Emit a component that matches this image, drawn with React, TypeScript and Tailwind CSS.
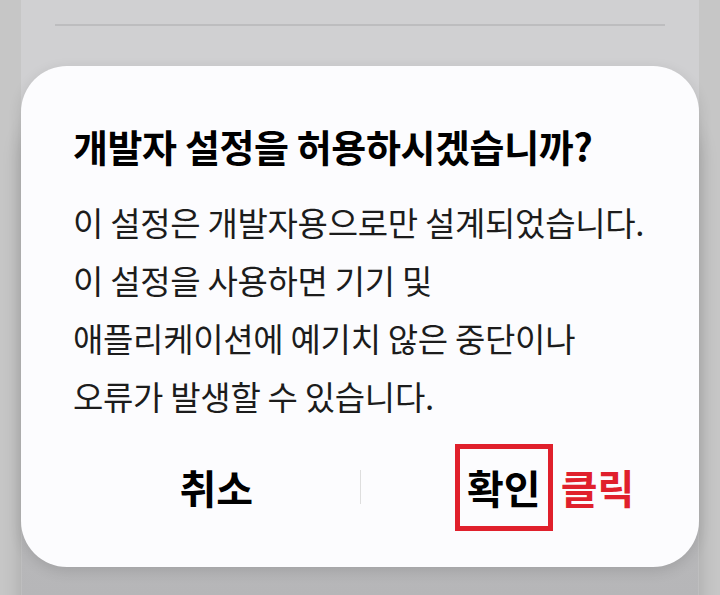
export default function App() {
  const font = { fontFamily: '"Noto Sans CJK KR", "Noto Sans", sans-serif' };

  return (
    <div className="w-[720px] h-[595px] bg-[#c9c9c9] overflow-hidden flex" style={font}>
      <div className="w-[21px] shrink-0 bg-[#c6c6c6]" />
      <div className="w-[678px] shrink-0 bg-[#d0d0d2] flex flex-col">
        <div className="h-[24px] shrink-0" />
        <div className="mx-[34px] h-[2px] bg-[#bdbdbf]" />
        <div className="h-[40px] shrink-0" />

        <div className="relative">
          {/* card behind the dialog, showing under it */}
          <div className="absolute left-[1px] right-[1px] top-[40px] h-[560px] rounded-[46px] bg-gradient-to-b from-[#c4c4c6] to-[#b4b4b6] shadow-[0_6px_20px_rgba(0,0,0,0.18)]" />

          <div className="relative bg-[#fcfcfe] rounded-[46px] h-[501px] px-[52px] pt-[56px] flex flex-col shadow-[0_4px_14px_rgba(0,0,0,0.12)]">
            <h2 className="text-[38px] leading-[48px] font-bold text-black tracking-[-0.4px] whitespace-nowrap">
              개발자 설정을 허용하시겠습니까?
            </h2>
            <div className="mt-[23px] text-[33px] leading-[58px] text-[#1c1c1c] tracking-[-0.3px] whitespace-nowrap">
              <p>이 설정은 개발자용으로만 설계되었습니다.</p>
              <p>이 설정을 사용하면 기기 및</p>
              <p>애플리케이션에 예기치 않은 중단이나</p>
              <p>오류가 발생할 수 있습니다.</p>
            </div>

            <div className="mt-[18px] h-[88px] flex items-center">
              <button className="flex-1 text-[40px] font-bold text-black leading-[48px]">취소</button>
              <div className="w-px h-[34px] bg-[#dedede]" />
              <div className="flex-1 flex justify-center">
                <div className="relative">
                  <div className="border-[5px] border-[#e0202c] w-[98px] h-[87px] flex items-center justify-center">
                    <span className="text-[40px] font-bold text-black leading-[48px] whitespace-nowrap">확인</span>
                  </div>
                  <span className="absolute left-[106px] top-[19px] text-[40px] font-bold text-[#e0202c] leading-[48px] whitespace-nowrap">
                    클릭
                  </span>
                </div>
              </div>
            </div>
          </div>
        </div>
      </div>
      <div className="flex-1 bg-[#c6c6c6]" />
    </div>
  );
}
